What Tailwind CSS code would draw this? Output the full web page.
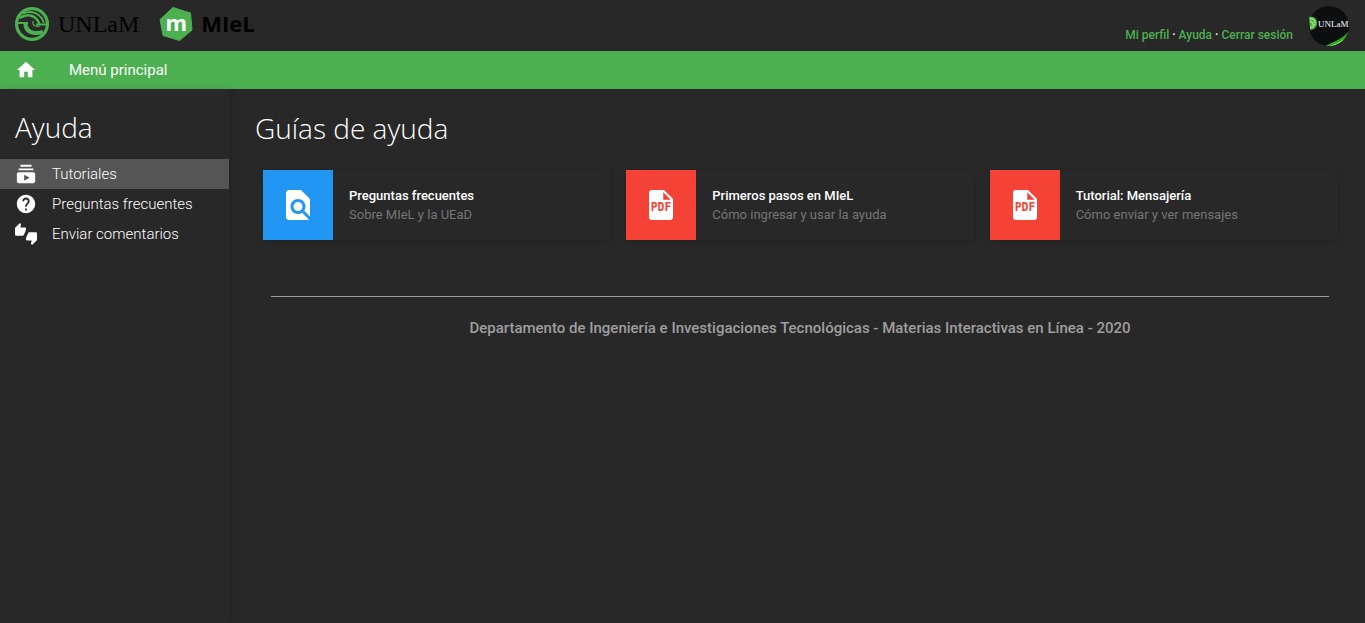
<!DOCTYPE html>
<html lang="es">
<head>
<meta charset="utf-8">
<meta name="viewport" content="width=device-width, initial-scale=1">
<title>MIeL - Ayuda</title>
<script src="https://cdn.jsdelivr.net/npm/@tailwindcss/browser@4"></script>
</head>
<body class="flex min-h-screen flex-col bg-[#282828] font-[Roboto,sans-serif] text-white">
<header class="flex h-[51px] items-center justify-between pr-4 pl-3.5">
  <div class="flex items-center pb-1">
    <a href="#" class="flex items-center gap-2">
      <svg class="size-9" viewBox="0 0 36 36" fill="none" stroke="#4caf50" aria-hidden="true">
        <circle cx="18" cy="18" r="15.4" stroke-width="3.2"/>
        <path d="M9 7.500C18 3.500 27 8 30 17" stroke-width="2"/>
        <path d="M5.500 12C14 7 22 9 25.500 18" stroke-width="2.600"/>
        <path d="M22 18.500H33M3 17H14" stroke-width="2.200"/>
        <path d="M11.500 16.500C11 25 18 29 29 26" stroke-width="4.200"/>
        <path d="M19 15C18 20 22 21 26 20" stroke-width="1.200"/>
      </svg>
      <span class="font-['Liberation_Serif',serif] text-2xl leading-8 text-black">UNLaM</span>
    </a>
    <a href="#" class="ml-5 flex items-center gap-2">
      <span class="relative flex h-9 w-[34px] items-center justify-center">
        <svg class="absolute inset-0 h-9 w-[34px]" viewBox="0 0 34 36" aria-hidden="true"><path fill="#4caf50" stroke="#4caf50" stroke-linejoin="round" d="M14 1.500 31.500 7 33 24 20.500 34.500 4 29.500 1 13.500Z"/></svg>
        <span class="relative pb-1 font-['Open_Sans',sans-serif] text-[22px] leading-8 font-bold">m</span>
      </span>
      <span class="pb-0.5 font-['Open_Sans',sans-serif] text-[22px] leading-8 font-bold text-black">MIeL</span>
    </a>
  </div>
  <div class="flex items-center gap-4">
    <nav class="pt-[18px] text-xs leading-4 font-medium"><a href="#" class="text-[#4caf50]">Mi perfil</a> · <a href="#" class="text-[#4caf50]">Ayuda</a> · <a href="#" class="text-[#4caf50]">Cerrar sesión</a></nav>
    <a href="#" aria-label="Perfil UNLaM" class="block size-10">
      <svg class="size-10" viewBox="0 0 40 40">
        <defs><clipPath id="avatar"><circle cx="20" cy="20" r="20"/></clipPath></defs>
        <g clip-path="url(#avatar)">
          <rect width="40" height="40" fill="#0b0d0f"/>
          <path fill="#28b010" d="M16 40C25 36 33 33 40 25V40Z"/>
          <path fill="none" stroke="#b8e8a8" stroke-width=".8" d="M22 40C30 37 36 34 40 29"/>
        </g>
        <path fill="#4cb83c" d="M0 11C5 10 8 13 8 17S5 24 1 24Z"/>
        <path fill="none" stroke="#d8f5d0" stroke-width="1" d="M1 13C4 12 6 14 6 17M1 16C3 15 4 17 4 19M1 21C3 22 5 20 6 18"/>
        <text x="9" y="21" font-family="Liberation Serif, serif" font-size="9" fill="#fff">UNLaM</text>
      </svg>
    </a>
  </div>
</header>
<nav class="flex h-[38px] items-center gap-8 bg-[#4caf50] px-[15px] text-[15px] leading-5">
  <a href="#" aria-label="Inicio"><svg class="size-[22px]" viewBox="0 0 24 24" fill="currentColor"><path d="M10 20v-6h4v6h5v-8h3L12 3 2 12h3v8z"/></svg></a>
  <a href="#">Menú principal</a>
</nav>
<div class="flex flex-1">
  <aside class="w-[229px] shrink-0 shadow-[2px_0_8px_rgba(0,0,0,0.12)]">
    <h2 class="px-[15px] pt-[18px] pb-3 font-['Open_Sans',sans-serif] text-[28px] leading-10 font-light">Ayuda</h2>
    <nav class="text-[15px] leading-5 font-light">
      <a href="#" aria-current="page" class="flex h-[30px] items-center gap-[15px] bg-[#555] px-[15px]">
        <svg class="size-[22px]" viewBox="0 0 24 24" fill="currentColor" aria-hidden="true"><path d="M20 8H4V6h16v2zm-2-6H6v2h12V2zm4 10v8c0 1.100-.9 2-2 2H4c-1.100 0-2-.9-2-2v-8c0-1.100.9-2 2-2h16c1.100 0 2 .9 2 2zm-6 4l-6-3.270v6.530L16 16z"/></svg>
        Tutoriales</a>
      <a href="#" class="flex h-[30px] items-center gap-[15px] px-[15px]">
        <svg class="size-[22px]" viewBox="0 0 24 24" fill="currentColor" aria-hidden="true"><path d="M12 2C6.480 2 2 6.480 2 12s4.480 10 10 10 10-4.480 10-10S17.520 2 12 2zm1 17h-2v-2h2v2zm2.070-7.750l-.9.920C13.450 12.900 13 13.500 13 15h-2v-.5c0-1.100.45-2.100 1.170-2.830l1.240-1.260c.37-.36.59-.86.59-1.410 0-1.100-.9-2-2-2s-2 .9-2 2H8c0-2.210 1.790-4 4-4s4 1.790 4 4c0 .88-.36 1.680-.93 2.250z"/></svg>
        Preguntas frecuentes</a>
      <a href="#" class="flex h-[30px] items-center gap-[15px] px-[15px]">
        <svg class="size-[22px]" viewBox="0 0 24 24" fill="currentColor" aria-hidden="true"><path d="M12 6c0-.55-.45-1-1-1H5.820l.66-3.180.02-.23c0-.31-.13-.59-.33-.8L5.380 0 .44 4.940C.17 5.210 0 5.590 0 6v6.500c0 .83.67 1.500 1.500 1.500h6.750c.62 0 1.150-.38 1.380-.91l2.260-5.290c.07-.17.11-.36.11-.55V6zm10.500 4h-6.750c-.62 0-1.150.38-1.380.91l-2.260 5.290c-.07.17-.11.36-.11.55V18c0 .55.45 1 1 1h5.180l-.66 3.180-.02.24c0 .31.13.59.33.8l.79.78 4.940-4.940c.27-.27.44-.65.44-1.060v-6.500c0-.83-.67-1.500-1.500-1.500z"/></svg>
        Enviar comentarios</a>
    </nav>
  </aside>
  <main class="min-w-0 flex-1 pr-7 pl-[26px]">
    <h1 class="pt-4 font-['Open_Sans',sans-serif] text-[28px] leading-[47px] font-light">Guías de ayuda</h1>
    <div class="mt-[18px] ml-2 grid grid-cols-3 gap-4">
      <a href="#" class="flex h-[70px] items-center gap-4 shadow-[0_2px_8px_rgba(0,0,0,0.14)]">
        <span class="flex size-[70px] items-center justify-center bg-[#2196f3]"><svg class="size-9" viewBox="0 0 24 24" fill="currentColor" aria-hidden="true"><path d="M20 19.590V8l-6-6H6c-1.100 0-1.990.9-1.990 2L4 20c0 1.100.89 2 1.990 2H18c.45 0 .85-.15 1.190-.4l-4.430-4.430c-.8.52-1.740.83-2.760.83-2.760 0-5-2.240-5-5s2.240-5 5-5 5 2.240 5 5c0 1.020-.31 1.960-.83 2.750L20 19.590zM9 13c0 1.660 1.340 3 3 3s3-1.340 3-3-1.340-3-3-3-3 1.340-3 3z"/></svg></span>
        <span class="text-[13px] leading-[19px]"><span class="block font-medium">Preguntas frecuentes</span><span class="block text-[#757575]">Sobre MIeL y la UEaD</span></span>
      </a>
      <a href="#" class="flex h-[70px] items-center gap-4 shadow-[0_2px_8px_rgba(0,0,0,0.14)]">
        <span class="flex size-[70px] items-center justify-center bg-[#f44336]"><svg class="size-9" viewBox="0 0 24 24" fill="currentColor"><path d="M6 2H14L20 8V20A2 2 0 0 1 18 22H6A2 2 0 0 1 4 20V4A2 2 0 0 1 6 2Z"/><path fill="#f44336" d="M13.500 3.500V8.500H18.500Z"/><text x="12" y="16.200" text-anchor="middle" font-family="DejaVu Sans Mono, monospace" font-weight="700" font-size="7.600" fill="#f44336">PDF</text></svg></span>
        <span class="text-[13px] leading-[19px]"><span class="block font-medium">Primeros pasos en MIeL</span><span class="block text-[#757575]">Cómo ingresar y usar la ayuda</span></span>
      </a>
      <a href="#" class="flex h-[70px] items-center gap-4 shadow-[0_2px_8px_rgba(0,0,0,0.14)]">
        <span class="flex size-[70px] items-center justify-center bg-[#f44336]"><svg class="size-9" viewBox="0 0 24 24" fill="currentColor"><path d="M6 2H14L20 8V20A2 2 0 0 1 18 22H6A2 2 0 0 1 4 20V4A2 2 0 0 1 6 2Z"/><path fill="#f44336" d="M13.500 3.500V8.500H18.500Z"/><text x="12" y="16.200" text-anchor="middle" font-family="DejaVu Sans Mono, monospace" font-weight="700" font-size="7.600" fill="#f44336">PDF</text></svg></span>
        <span class="text-[13px] leading-[19px]"><span class="block font-medium">Tutorial: Mensajería</span><span class="block text-[#757575]">Cómo enviar y ver mensajes</span></span>
      </a>
    </div>
    <footer class="mt-14 mr-2 ml-4 border-t border-[#9e9e9e] pt-5 text-center text-[15px] leading-[22px] font-medium text-[#9e9e9e]">Departamento de Ingeniería e Investigaciones Tecnológicas - Materias Interactivas en Línea - 2020</footer>
  </main>
</div>
</body>
</html>
